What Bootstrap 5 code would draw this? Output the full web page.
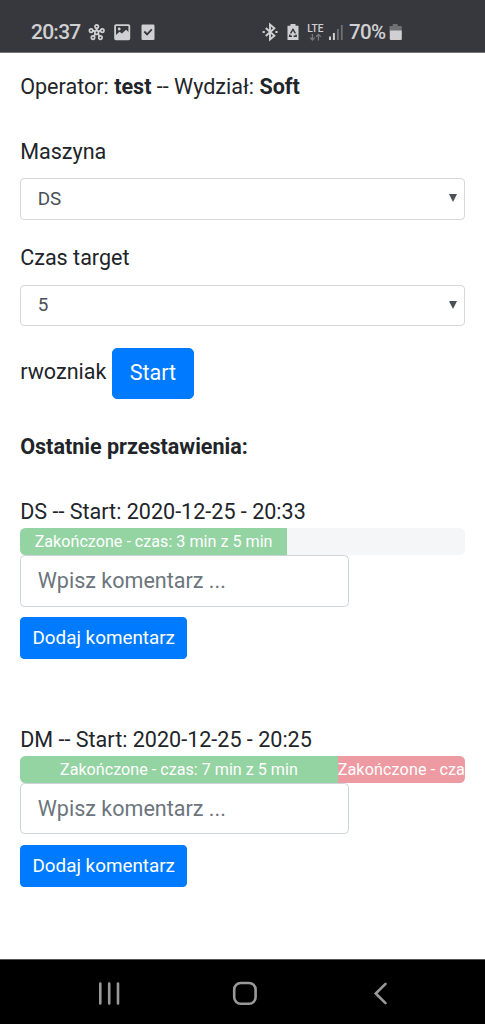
<!DOCTYPE html>
<html lang="pl">
<head>
<meta charset="utf-8">
<meta name="viewport" content="width=device-width, initial-scale=1">
<title>Przestawienia</title>
<link href="https://cdn.jsdelivr.net/npm/bootstrap@5.3.0/dist/css/bootstrap.min.css" rel="stylesheet">
<style>
html { font-size: 21.55px; }
body { font-family: Roboto, "Liberation Sans", sans-serif; color: #212529; height: 1024px; overflow: hidden; background: #fff; }
.status-bar { height: 53px; background: #37383d; color: #d0d0d2; padding: 12px 0 0 31px; border-bottom: 1px solid #77777b; }
.status-bar .clock { font-size: 21px; line-height: 41px; font-weight: 500; letter-spacing: -.75px; width: 57px; }
.status-bar .level { font-size: 20.5px; line-height: 41px; font-weight: 500; letter-spacing: -.7px; width: 40px; margin-left: -1px; }
.page { padding: 17.9px 20.2px 0; }
.form-select, .form-control { border: 1.35px solid #ced4da; border-radius: 4.5px; box-shadow: none; }
.form-select { height: 41.6px; padding: 0 17px 0 16.5px; font-size: .875rem; color: #495057; border-color: #d5d7da; border-radius: 4px;
  background-image: url("data:image/svg+xml,%3Csvg xmlns='http://www.w3.org/2000/svg' viewBox='0 0 8 8'%3E%3Cpath d='M0 0h8L4 8z' fill='%23495057'/%3E%3C/svg%3E");
  background-size: 8px 8px; background-position: right 6.5px top 15px; }
.form-label { margin-bottom: 10.6px; display: block; }
.field-gap { margin-top: 21.6px; }
.line-gap { margin-top: 32.3px; }
.user-name { margin-top: -2px; }
.comment-box { width: 329px; height: 51.3px; padding: 0 16.5px; }
.comment-box::placeholder { color: #6c757d; }
.btn-primary { --bs-btn-bg: #007bff; --bs-btn-border-color: #007bff; --bs-btn-border-radius: 5px; }
.btn-start { width: 82px; height: 51.3px; padding: 0; margin-left: 5.5px; }
.btn-sm { height: 41.6px; width: 167px; padding: 0; --bs-btn-border-radius: 4px; margin-top: 10.8px; }
.progress { height: 27px; border-radius: 5.4px; font-size: 16.15px; background: #f4f6f8; }
.progress-bar { padding-top: 1px; }
.bar-ok { background: #94d3a2; }
.bar-late { background: #ee9aa2; letter-spacing: .12px; }
.entry { height: 227.7px; }
.nav-bar { height: 65px; background: #000; border-top: 1px solid #555; }
</style>
</head>
<body class="d-flex flex-column">
<header class="status-bar d-flex flex-shrink-0">
  <span class="clock">20:37</span>
  <svg width="174" height="40" viewBox="88 12 174 40" fill="none" stroke="#d0d0d2" stroke-width="1.7">
    <path d="M96.7 32v-4M96.7 32l4-1.2M96.7 32l-4-1.2M96.7 32l2.8 4M96.7 32l-2.8 4" stroke-width="2"/>
    <circle cx="96.7" cy="26.5" r="1.7"/><circle cx="102.3" cy="30.6" r="1.7"/><circle cx="91.1" cy="30.6" r="1.7"/><circle cx="100.4" cy="37.6" r="1.7"/><circle cx="93" cy="37.6" r="1.7"/><circle cx="96.7" cy="32.5" r="1.8" fill="#37383d"/>
    <rect x="115.1" y="25.2" width="14.2" height="14.2" rx=".8" stroke-width="1.8"/>
    <path d="M116 35l3.5-3.2 2.5 1.6 4-3.6 3.3 2.8v6.4H116z" fill="#d0d0d2" stroke="none"/><circle cx="119.2" cy="29" r="1.4" fill="#d0d0d2" stroke="none"/>
    <rect x="141.5" y="24.5" width="13" height="15.5" rx="1.2" fill="#d0d0d2" stroke="none"/>
    <path d="M144.3 31.5l2.8 2.9 4.7-5" stroke="#37383d" stroke-width="1.8"/>
  </svg>
  <svg width="88" height="40" viewBox="262 12 88 40" fill="none" stroke="#d0d0d2" stroke-width="1.9">
    <path d="M265.8 28l8.6 7.8-4.4 3.6V24.6l4.4 3.6-8.6 7.8"/><path d="M262.6 32h2.2M275.4 32h2.2" stroke-width="2.2"/>
    <path d="M290.5 24h5v1.7h3V40h-11V25.7h3z" fill="#d0d0d2" stroke="none"/>
    <path d="M290.6 33.4l2.4-4 2.4 4M296 34.5l.2 1.7h-2.7M292 36.2h-2.4l.5-1.7" stroke="#37383d" stroke-width="1.4"/>
    <text x="307.3" y="31.8" font-size="10" font-weight="500" fill="#d0d0d2" stroke="none" textLength="16.2" lengthAdjust="spacingAndGlyphs">LTE</text>
    <path d="M312.4 34v6M310 37.6l2.4 2.4 2.4-2.4M318.4 40.4v-6M316 36.8l2.4-2.4 2.4 2.4" stroke="#78797d" stroke-width="1.3"/>
    <path d="M330 36.5V40M333.9 33V40" stroke-width="2"/><path d="M337.9 29V40M341.8 25V40" stroke="#707175" stroke-width="1.8"/>
  </svg>
  <span class="level">70%</span>
  <svg width="14" height="40" viewBox="388 12 14 40"><path d="M391.7 24h5v2h4v5H388.5v-5h3.2z" fill="#707175"/><path d="M388.8 30.5h12V39q0 1-1 1h-10q-1 0-1-1z" fill="#d0d0d2"/></svg>
</header>
<main class="page flex-grow-1 overflow-hidden">
  <div>Operator: <b>test</b> -- Wydział: <b>Soft</b></div>
  <div class="line-gap">
    <label class="form-label" for="m">Maszyna</label>
    <select class="form-select" id="m"><option>DS</option></select>
  </div>
  <div class="field-gap">
    <label class="form-label" for="t">Czas target</label>
    <select class="form-select" id="t"><option>5</option></select>
  </div>
  <div class="field-gap d-flex align-items-center">
    <span class="user-name">rwozniak</span><button class="btn btn-primary btn-start">Start</button>
  </div>
  <div class="line-gap fw-bold">Ostatnie przestawienia:</div>
  <section class="entry line-gap">
    <div>DS -- Start: 2020-12-25 - 20:33</div>
    <div class="progress"><div class="progress-bar bar-ok" style="width:60%">Zakończone - czas: 3 min z 5 min</div></div>
    <input class="form-control comment-box" placeholder="Wpisz komentarz ...">
    <button class="btn btn-primary btn-sm">Dodaj komentarz</button>
  </section>
  <section class="entry">
    <div>DM -- Start: 2020-12-25 - 20:25</div>
    <div class="progress"><div class="progress-bar bar-ok" style="width:71.4%">Zakończone - czas: 7 min z 5 min</div><div class="progress-bar bar-late align-items-start" style="width:28.6%">Zakończone - czas: 7 min z 5 min</div></div>
    <input class="form-control comment-box" placeholder="Wpisz komentarz ...">
    <button class="btn btn-primary btn-sm">Dodaj komentarz</button>
  </section>
</main>
<footer class="nav-bar flex-shrink-0">
  <svg class="d-block" width="485" height="63" viewBox="0 960 485 63" fill="none" stroke="#999" stroke-width="2.6" stroke-linecap="round">
    <path d="M100.3 983.5v20M109.2 983.5v20M118 983.5v20"/>
    <rect x="234.2" y="983" width="21.4" height="20.8" rx="6.5"/>
    <path d="M385.5 983.8l-9.8 9.7 9.8 9.7"/>
  </svg>
</footer>
</body>
</html>
